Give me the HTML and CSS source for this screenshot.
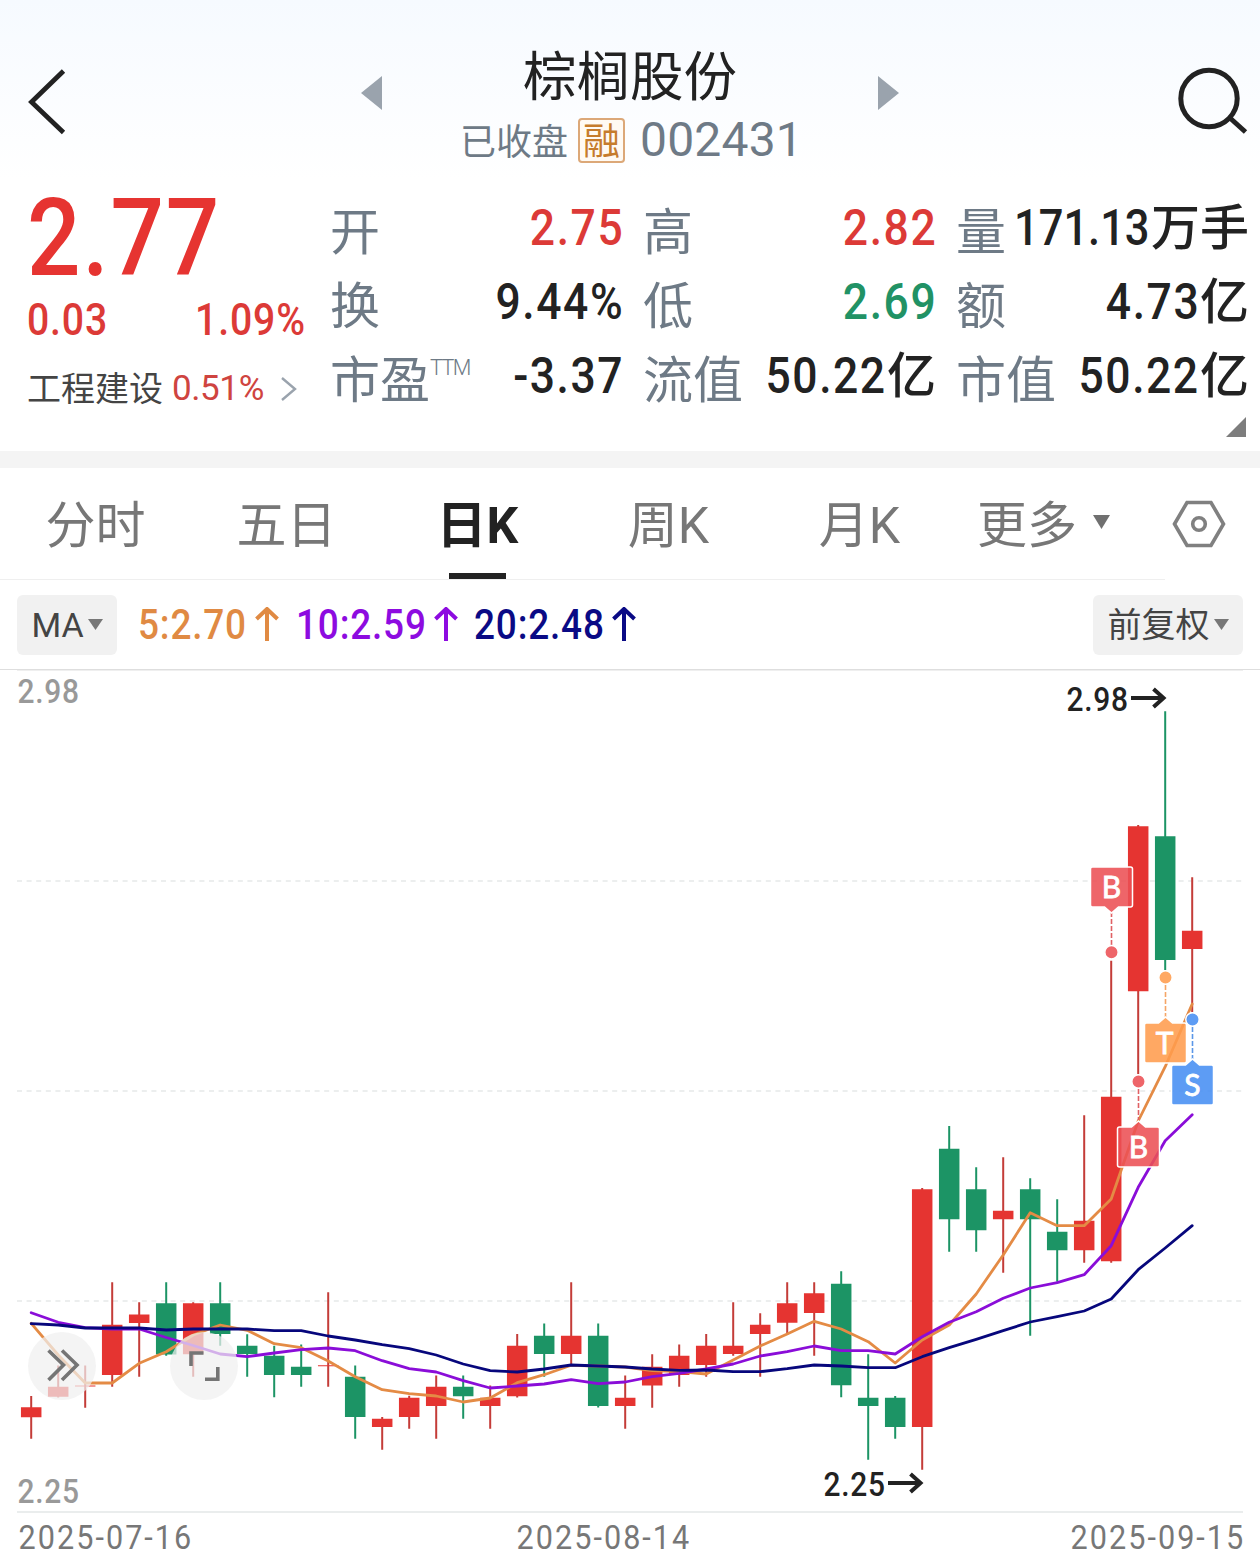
FILE: index.html
```html
<!DOCTYPE html>
<html lang="zh-CN">
<head>
<meta charset="utf-8">
<title>棕榈股份 002431</title>
<link rel="stylesheet" href="styles.css">
</head>
<body>
<header class="topbar">
  <svg class="back" viewBox="28 69 38 66"><path d="M63.5 71L31.5 102L63.5 132.500" fill="none" stroke="#222" stroke-width="4.800"/></svg>
  <svg class="prev" viewBox="0 0 21 34"><path d="M0 17L21 0V34Z" fill="#9aa3ad"/></svg>
  <div class="heading">
    <h1 class="name">棕榈股份</h1>
    <div class="sub"><span class="status">已收盘</span><span class="margin-tag">融</span><span class="code">002431</span></div>
  </div>
  <svg class="next" viewBox="0 0 21 34"><path d="M21 17L0 0V34Z" fill="#9aa3ad"/></svg>
  <svg class="search" viewBox="1177 66 71 70"><g fill="none" stroke="#222" stroke-width="5"><circle cx="1209" cy="98.500" r="28.200"/><path d="M1230 118L1245.500 132"/></g></svg>
</header>

<section class="quote">
  <div class="summary">
    <div class="price"><span class="num left">2.77</span></div>
    <div class="change"><span class="num left">0.03</span><span class="num">1.09%</span></div>
    <div class="sector"><span>工程建设</span><span class="sector-pct">0.51%</span>
      <svg class="chev" viewBox="0 0 16 24"><path d="M1 1L14 12L1 23" fill="none" stroke="#9aa3ad" stroke-width="2.400"/></svg></div>
  </div>
  <dl class="stats">
    <div class="stat"><dt>开</dt><dd class="up"><span class="num">2.75</span></dd></div>
    <div class="stat"><dt>高</dt><dd class="up"><span class="num">2.82</span></dd></div>
    <div class="stat"><dt>量</dt><dd><span class="num tight">171.13</span><span class="unit">万手</span></dd></div>
    <div class="stat"><dt>换</dt><dd><span class="num">9.44%</span></dd></div>
    <div class="stat"><dt>低</dt><dd class="down"><span class="num">2.69</span></dd></div>
    <div class="stat"><dt>额</dt><dd><span class="num">4.73</span><span class="unit">亿</span></dd></div>
    <div class="stat"><dt>市盈<sup>TTM</sup></dt><dd><span class="num">-3.37</span></dd></div>
    <div class="stat"><dt>流值</dt><dd><span class="num">50.22</span><span class="unit">亿</span></dd></div>
    <div class="stat"><dt>市值</dt><dd><span class="num">50.22</span><span class="unit">亿</span></dd></div>
  </dl>
  <svg class="corner" viewBox="0 0 20 20"><path d="M20 0V20H0Z" fill="#7d7d7d"/></svg>
</section>

<div class="periods">
  <nav class="tabs">
    <a class="tab">分时</a>
    <a class="tab">五日</a>
    <a class="tab active">日K</a>
    <a class="tab">周K</a>
    <a class="tab">月K</a>
    <a class="tab more">更多<svg class="caret-lg" viewBox="0 0 17 14"><path d="M0 0H17L8.500 14Z" fill="#707070"/></svg></a>
  </nav>
  <svg class="settings" viewBox="1171 498 56 52"><g fill="none" stroke="#808080" stroke-width="3.600"><path d="M1174.500 524L1187 502.500H1211L1223.500 524L1211 545.500H1187Z"/><circle cx="1199" cy="524" r="6.300"/></g></svg>
</div>

<div class="indicators">
  <button class="chip">MA<svg class="caret" viewBox="0 0 15 11"><path d="M0 0H15L7.500 11Z" fill="#777"/></svg></button>
  <span class="ma ma5"><span class="num left">5:2.70</span><svg class="arrow" viewBox="0 0 24 34"><path d="M12 34V3M1.500 12L12 2L22.500 12"/></svg></span>
  <span class="ma ma10"><span class="num left">10:2.59</span><svg class="arrow" viewBox="0 0 24 34"><path d="M12 34V3M1.500 12L12 2L22.500 12"/></svg></span>
  <span class="ma ma20"><span class="num left">20:2.48</span><svg class="arrow" viewBox="0 0 24 34"><path d="M12 34V3M1.500 12L12 2L22.500 12"/></svg></span>
  <button class="chip adjust">前复权<svg class="caret" viewBox="0 0 15 11"><path d="M0 0H15L7.500 11Z" fill="#777"/></svg></button>
</div>

<svg class="chart" viewBox="0 669 1260 885">
  <path class="frame" d="M0 669.500H1260"/>
  <path class="frame-soft" d="M17 670.500H1243"/>
  <path class="grid" d="M17 881H1243M17 1091H1243M17 1301H1243"/>
  <path class="axis" d="M17 1512H1243"/>
  <text class="scale" transform="translate(17.500 703) scale(.88 1)" textLength="70">2.98</text>
  <text class="scale" transform="translate(17.500 1503) scale(.88 1)" textLength="70">2.25</text>

  <g transform="translate(31.200 0)">
    <path class="wick up-line" d="M0 1396V1438.700M27 1365.500V1397.500M54 1365.500V1407.700M81 1282.300V1386.700M108 1302.300V1376.700M162 1302.300V1376.700M297 1292.300V1386.700M351 1417V1449.700M378 1395.700V1428.700M405 1375.500V1438.700M459 1385.500V1428.700M486 1334V1397.500M540 1282.300V1365.500M594 1375.500V1428.700M621 1354.300V1407.700M648 1344.500V1386.700M675 1334V1376.700M702 1302.300V1355.700M729 1313.300V1376.700M756 1282.300V1335M783 1282.300V1355.700M891 1188V1469.700M972 1157.300V1272.700M1053 1115.300V1262.700M1080 960.700V1262.700M1107 825V1074M1161 877.300V1012"/>
    <path class="wick down-line" d="M135 1282.300V1355.700M189 1282.300V1345.700M216 1334.300V1376.700M243 1345.700V1397.300M270 1344.500V1386.700M324 1365.500V1438.700M432 1375.500V1418.700M513 1323.500V1376.700M567 1323.500V1407.500M810 1271.300V1397.300M837 1354.300V1459.700M864 1396V1438.700M918 1126V1251.700M945 1167.300V1251.700M999 1178.300V1335.700M1026 1199.300V1281.700M1134 711.300V970"/>
    <path class="body up-line" d="M0 1407.300V1417.300M27 1386.700V1396.700M54 1385.500V1386.500M81 1324.700V1375M108 1314.500V1323M162 1303.300V1354.300M297 1365.300V1366.300M351 1418.700V1427M378 1397.700V1417M405 1386.700V1406M459 1397.700V1406M486 1345.700V1396.300M540 1335.700V1354M594 1397.700V1406M621 1366.700V1385.500M648 1355.700V1375M675 1345.700V1365M702 1345.700V1354M729 1324.700V1334M756 1303.300V1322.700M783 1293.300V1313M891 1189.300V1427M972 1210.700V1219.300M1053 1220.700V1250.300M1080 1096.700V1261.300M1107 826.300V991.300M1161 930.700V949"/>
    <path class="body down-line" d="M135 1303.300V1354.500M189 1303.300V1334M216 1345.700V1354M243 1355.700V1375M270 1366.700V1375M324 1376.700V1417M432 1386.700V1396.300M513 1335.700V1354M567 1335.700V1406M810 1283.700V1385.300M837 1397.700V1406M864 1397.700V1427M918 1148.700V1219.300M945 1189.300V1230.300M999 1189.300V1219.300M1026 1231.700V1250.300M1134 836.300V960"/>
    <polyline class="avg avg5" points="0,1323.300 27,1355 54,1383 81,1383 108,1363.300 135,1351.700 162,1335 189,1325 216,1330.300 243,1343.700 270,1347.700 297,1361 324,1376.700 351,1389.700 378,1393.700 405,1396 432,1402 459,1398 486,1382.700 513,1374.700 540,1365.300 567,1366 594,1367 621,1370.700 648,1371.700 675,1374 702,1360 729,1346 756,1334 783,1321.300 810,1329 837,1341.700 864,1363 891,1340 918,1325 945,1294 972,1255 999,1212.700 1026,1225.700 1053,1225.700 1080,1199 1107,1121 1134,1066.700 1161,1004"/>
    <polyline class="avg avg10" points="0,1312.700 27,1322.300 54,1327.700 81,1329 108,1329 135,1337.500 162,1345.500 189,1354 216,1356.700 243,1353 270,1349.700 297,1348 324,1350.700 351,1360.700 378,1368.700 405,1372 432,1380.700 459,1388 486,1386 513,1384 540,1379.700 567,1383.700 594,1382 621,1376.700 648,1373.300 675,1369 702,1364 729,1356 756,1351.700 783,1346 810,1350.700 837,1350.700 864,1354 891,1336.700 918,1322.300 945,1311.700 972,1298.300 999,1288 1026,1282.700 1053,1274.700 1080,1245.700 1107,1187.300 1134,1140.700 1161,1114.700"/>
    <polyline class="avg avg20" points="0,1323.700 27,1325 54,1328 81,1328 108,1328 135,1330 162,1329 189,1329 216,1329 243,1330.700 270,1330.700 297,1336 324,1340 351,1344.700 378,1348.700 405,1355 432,1364 459,1370.700 486,1372 513,1369 540,1365 567,1366 594,1367 621,1369 648,1370.300 675,1370 702,1371.700 729,1371.700 756,1368.700 783,1365 810,1366 837,1367.700 864,1367.700 891,1356.700 918,1347.700 945,1339.300 972,1330.700 999,1322 1026,1316.700 1053,1311 1080,1299 1107,1269.700 1134,1248 1161,1225.700"/>
  </g>

  <g class="extreme">
    <text transform="translate(1066.500 711) scale(.88 1)" textLength="70">2.98</text>
    <path d="M1131 698H1163M1153.500 689L1163.500 698L1153.500 707"/>
    <text transform="translate(823.500 1496) scale(.88 1)" textLength="70">2.25</text>
    <path d="M888 1483H920M910.500 1474L920.500 1483L910.500 1492"/>
  </g>

  <g class="mark buy">
    <path class="stem" d="M1111.500 912V945"/>
    <circle cx="1111.500" cy="952.300" r="6.700"/>
    <path class="flag" d="M1092.500 867H1130.500Q1132.500 867 1132.500 869V905Q1132.500 907 1130.500 907H1118.500L1111.500 913L1104.500 907H1092.500Q1090.500 907 1090.500 905V869Q1090.500 867 1092.500 867Z"/>
    <text x="1111.500" y="898">B</text>
  </g>
  <g class="mark buy">
    <path class="stem" d="M1138.500 1089V1120"/>
    <circle cx="1138.500" cy="1081.500" r="6.700"/>
    <path class="flag" d="M1119.500 1127H1131.500L1138.500 1121L1145.500 1127H1157.500Q1159.500 1127 1159.500 1129V1165Q1159.500 1167 1157.500 1167H1119.500Q1117.500 1167 1117.500 1165V1129Q1117.500 1127 1119.500 1127Z"/>
    <text x="1138.500" y="1158">B</text>
  </g>
  <g class="mark trade">
    <path class="stem" d="M1165.500 985V1017"/>
    <circle cx="1165.500" cy="977.500" r="6.700"/>
    <path class="flag" d="M1146.500 1023H1158.500L1165.500 1017L1172.500 1023H1184.500Q1186.500 1023 1186.500 1025V1061Q1186.500 1063 1184.500 1063H1146.500Q1144.500 1063 1144.500 1061V1025Q1144.500 1023 1146.500 1023Z"/>
    <text x="1164.500" y="1054">T</text>
  </g>
  <g class="mark sell">
    <path class="stem" d="M1192.500 1027V1059"/>
    <circle cx="1192.500" cy="1019.500" r="6.700"/>
    <path class="flag" d="M1173.500 1065H1185.500L1192.500 1059L1199.500 1065H1211.500Q1213.500 1065 1213.500 1067V1103Q1213.500 1105 1211.500 1105H1173.500Q1171.500 1105 1171.500 1103V1067Q1171.500 1065 1173.500 1065Z"/>
    <text x="1192.500" y="1096">S</text>
  </g>

  <g class="tool">
    <circle cx="62" cy="1366" r="34"/>
    <path d="M48.500 1350.500L63.500 1365L48.500 1380M62 1350.500L77 1365L62 1380"/>
    <circle cx="204" cy="1366" r="34"/>
    <path d="M191 1366V1353H203.500M205 1379.300H217.800V1367"/>
  </g>

  <g class="dates">
    <text transform="translate(18.500 1549) scale(.9 1)" textLength="192">2025-07-16</text>
    <text transform="translate(516.500 1549) scale(.9 1)" textLength="192">2025-08-14</text>
    <text transform="translate(1070.500 1549) scale(.9 1)" textLength="192">2025-09-15</text>
  </g>
</svg>
</body>
</html>
```
FILE: styles.css
```css
* { box-sizing: border-box; margin: 0; padding: 0; }
body {
  width: 1260px;
  background: linear-gradient(#f6faff, #fff 180px) no-repeat #fff;
  font-family: Roboto, "Noto Sans CJK SC", sans-serif;
  color: #222;
}
svg { display: block; flex: none; }

/* Narrow numerals, anchored to the side they align with */
.num {
  display: inline-block; white-space: nowrap;
  letter-spacing: .035em; margin-right: -.035em;
  transform: scaleX(.88); transform-origin: right;
}
.num.left { transform-origin: left; }
.num.tight { letter-spacing: 0; margin-right: 0; }

.topbar { display: flex; align-items: flex-start; height: 190px; padding-left: 28px; }
.back { width: 38px; height: 66px; margin: 69px 295px 0 0; }
.prev, .next { width: 21px; height: 34px; margin-top: 76px; }
.search { width: 71px; height: 70px; margin: 66px 0 0 278px; }
.heading { width: 496px; padding-top: 46px; }
.name { font-size: 53.500px; line-height: 64px; height: 66px; font-weight: 400; text-align: center; }
.sub { display: flex; align-items: center; justify-content: center; height: 56px; padding-left: 3px; color: #6e7a86; }
.status { padding-top: 5px; font-size: 36px; line-height: 50px; }
.margin-tag {
  width: 47px; height: 45px; margin: 0 15px 0 10px;
  border: 2px solid #dca878; border-radius: 4px;
  background: #fffaf3; color: #c67c2c;
  font-size: 37px; line-height: 46px; text-align: center;
}
.code { font-size: 48px; line-height: 50px; letter-spacing: .200px; }

.quote { display: flex; position: relative; height: 261px; }
.summary { width: 330px; padding-left: 27px; }
.price { font-size: 107px; line-height: 97px; font-weight: 500; color: #e63431; }
.price .num { letter-spacing: .02em; }
.change {
  display: flex; justify-content: space-between; padding-right: 26px;
  font-size: 44.500px; line-height: 66px; font-weight: 500; color: #dc3a37;
}
.change .num { letter-spacing: .022em; }
.sector { display: flex; align-items: center; height: 72px; font-size: 34px; line-height: 72px; color: #444; }
.sector-pct { margin-left: 9px; font-size: 35px; letter-spacing: -.400px; color: #cf4440; }
.chev { width: 16px; height: 24px; margin-left: 17px; }
.stats {
  display: grid; grid-template-columns: repeat(3, 292px); grid-auto-rows: 74px; column-gap: 21px;
  padding-top: 1px; font-size: 50.500px; line-height: 74px;
}
.stat { display: flex; justify-content: space-between; white-space: nowrap; }
.stat dt { width: 0; padding-top: 5px; font-size: 50px; color: #6e7a86; }
.stat dd { font-weight: 500; }
.stat .unit { display: inline-block; margin: 0 -1px 0 2px; font-size: 49px; }
.stat sup { font-size: 21.500px; font-weight: 300; line-height: 0; vertical-align: 23px; letter-spacing: -1.500px; }
.stat .tight { transform: scaleX(.86); }
.stat .tight + .unit { margin-left: 1px; }
.stat .up { color: #dc3a37; }
.stat .down { color: #219265; }
.corner { position: absolute; right: 14px; bottom: 14px; width: 20px; height: 20px; }

.periods { display: flex; height: 129px; border-top: 17px solid #f4f4f4; background: #fff; }
.tabs { display: flex; width: 1165px; border-bottom: 1px solid #efefef; }
.tab {
  display: flex; flex-direction: column; align-items: center; width: 191px; padding-top: 2px;
  font-size: 50px; line-height: 112px; color: #777;
}
.active { color: #222; font-weight: 700; }
.active::after { content: ""; width: 57px; height: 6px; margin-top: -9px; background: #222; }
.more { flex-direction: row; padding: 4px 0 0 22px; }
.caret-lg { width: 17px; height: 14px; margin: -7px 0 0 16px; }
.settings { width: 56px; height: 52px; margin: 30px 0 0 6px; }

.indicators { display: flex; align-items: center; height: 89px; padding: 0 17px; }
.chip {
  display: flex; align-items: center; justify-content: center; width: 100px; height: 60px;
  border: 0; border-radius: 6px; background: #f1f1f1; color: #444;
  font-family: inherit; font-size: 34px; line-height: 62px;
}
.adjust { width: 150px; margin-left: auto; line-height: 64px; }
.caret { width: 15px; height: 11px; margin-left: 4px; }
.ma { display: flex; align-items: center; font-size: 42px; line-height: 60px; font-weight: 500; }
.ma .num { width: 129px; margin-right: 0; letter-spacing: .022em; }
.ma5 .num { width: 108px; }
.arrow { width: 24px; height: 34px; margin: 0 0 2px 9px; fill: none; stroke: currentColor; stroke-width: 4; }
.ma5 { margin-left: 21px; color: #e08a43; }
.ma10 { margin-left: 17px; color: #8d0be0; }
.ma20 { margin-left: 16px; color: #0a0a85; }

.chart { width: 1260px; height: 885px; }
.frame { stroke: #dedede; }
.frame-soft { stroke: #efefef; }
.grid { stroke: #eceeee; stroke-width: 2; stroke-dasharray: 5 4.600; }
.axis { stroke: #eaeded; stroke-width: 2; }
.scale { font-size: 34px; font-weight: 500; fill: #999; }
.dates { font-size: 34px; fill: #777; }
.wick { stroke-width: 2; }
.body { stroke-width: 20.500; }
.up-line { stroke: #e53431; }
.down-line { stroke: #1c9465; }
.wick.up-line { stroke: #c43c38; }
.avg { fill: none; stroke-width: 2.800; stroke-linecap: round; stroke-linejoin: round; }
.avg5 { stroke: #e48b45; }
.avg10 { stroke: #8a0dd8; }
.avg20 { stroke: #07077c; }
.extreme text { font-size: 34px; font-weight: 500; fill: #222; }
.extreme path { fill: none; stroke: #222; stroke-width: 4; }
.mark circle, .mark .flag { stroke: #fff; stroke-width: 1.500; fill-opacity: .88; }
.mark text { font: 400 30px Lato, sans-serif; fill: #fff; stroke: #fff; stroke-width: .800; text-anchor: middle; }
.stem { stroke-width: 1.600; stroke-dasharray: 5 2; }
.buy { fill: #ec5054; }
.buy .stem { stroke: #e06064; }
.trade { fill: #ff9c4d; }
.trade .stem { stroke: #f5a566; }
.sell { fill: #478ef2; }
.sell .stem { stroke: #5b97e8; }
.tool circle { fill: #f0f0f0; fill-opacity: .72; }
.tool path { fill: none; stroke: #757575; stroke-width: 3.600; }
```
